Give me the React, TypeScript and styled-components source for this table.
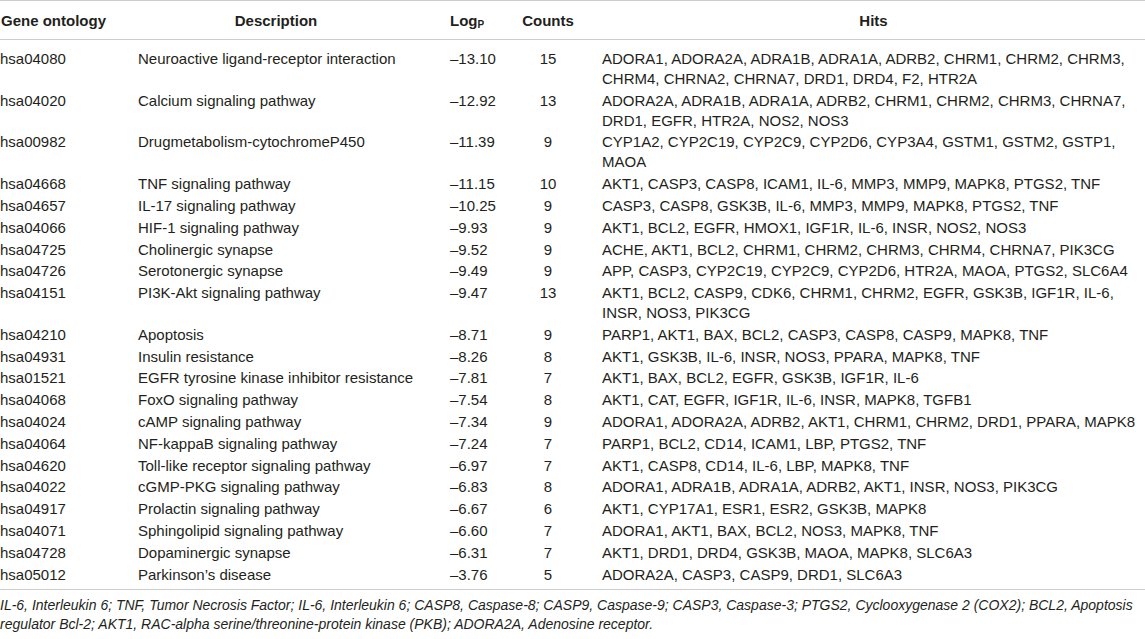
import React from "react";
import styled, { createGlobalStyle } from "styled-components";

const GlobalStyle = createGlobalStyle`
  html, body {
    margin: 0;
    padding: 0;
    background: #ffffff;
  }
  body {
    font-family: "Liberation Sans", Arial, Helvetica, sans-serif;
    color: #231f20;
  }
`;

const COLS = "138px 276px 90px 88px 1fr";

const Page = styled.div`
  width: 1145px;
  display: flex;
  flex-direction: column;
`;

const Table = styled.div`
  display: flex;
  flex-direction: column;
  border-top: 1px solid #cdcdcd;
  border-bottom: 1px solid #cdcdcd;
`;

const HeaderRow = styled.div`
  display: grid;
  grid-template-columns: ${COLS};
  border-bottom: 1px solid #cdcdcd;
  padding: 10px 0 8px;
  font-weight: 700;
  font-size: 15px;
  line-height: 20px;
`;

const HeaderCell = styled.div<{ $align?: "left" | "center"; $padLeft?: number }>`
  text-align: ${(p) => p.$align ?? "left"};
  padding-left: ${(p) => p.$padLeft ?? 0}px;
  white-space: nowrap;
`;

const Sub = styled.sub`
  font-size: 10px;
  vertical-align: -2px;
  line-height: 0;
`;

const Body = styled.div`
  display: flex;
  flex-direction: column;
  padding: 8px 0 4px;
`;

const Row = styled.div`
  display: grid;
  grid-template-columns: ${COLS};
  padding: 0.9px 0;
  font-size: 15px;
  line-height: 20px;
`;

const Cell = styled.div<{ $align?: "left" | "center"; $padLeft?: number }>`
  text-align: ${(p) => p.$align ?? "left"};
  padding-left: ${(p) => p.$padLeft ?? 0}px;
  white-space: nowrap;
`;

const HitLine = styled.div`
  white-space: nowrap;
`;

const Footnote = styled.p`
  margin: 0;
  padding-top: 6px;
  font-style: italic;
  font-size: 14px;
  line-height: 19px;
`;

type Entry = {
  id: string;
  desc: string;
  logp: string;
  count: string;
  hits: string[];
};

const DATA: Entry[] = [
  {
    id: "hsa04080",
    desc: "Neuroactive ligand-receptor interaction",
    logp: "–13.10",
    count: "15",
    hits: [
      "ADORA1, ADORA2A, ADRA1B, ADRA1A, ADRB2, CHRM1, CHRM2, CHRM3,",
      "CHRM4, CHRNA2, CHRNA7, DRD1, DRD4, F2, HTR2A",
    ],
  },
  {
    id: "hsa04020",
    desc: "Calcium signaling pathway",
    logp: "–12.92",
    count: "13",
    hits: [
      "ADORA2A, ADRA1B, ADRA1A, ADRB2, CHRM1, CHRM2, CHRM3, CHRNA7,",
      "DRD1, EGFR, HTR2A, NOS2, NOS3",
    ],
  },
  {
    id: "hsa00982",
    desc: "Drugmetabolism-cytochromeP450",
    logp: "–11.39",
    count: "9",
    hits: [
      "CYP1A2, CYP2C19, CYP2C9, CYP2D6, CYP3A4, GSTM1, GSTM2, GSTP1,",
      "MAOA",
    ],
  },
  {
    id: "hsa04668",
    desc: "TNF signaling pathway",
    logp: "–11.15",
    count: "10",
    hits: ["AKT1, CASP3, CASP8, ICAM1, IL-6, MMP3, MMP9, MAPK8, PTGS2, TNF"],
  },
  {
    id: "hsa04657",
    desc: "IL-17 signaling pathway",
    logp: "–10.25",
    count: "9",
    hits: ["CASP3, CASP8, GSK3B, IL-6, MMP3, MMP9, MAPK8, PTGS2, TNF"],
  },
  {
    id: "hsa04066",
    desc: "HIF-1 signaling pathway",
    logp: "–9.93",
    count: "9",
    hits: ["AKT1, BCL2, EGFR, HMOX1, IGF1R, IL-6, INSR, NOS2, NOS3"],
  },
  {
    id: "hsa04725",
    desc: "Cholinergic synapse",
    logp: "–9.52",
    count: "9",
    hits: ["ACHE, AKT1, BCL2, CHRM1, CHRM2, CHRM3, CHRM4, CHRNA7, PIK3CG"],
  },
  {
    id: "hsa04726",
    desc: "Serotonergic synapse",
    logp: "–9.49",
    count: "9",
    hits: ["APP, CASP3, CYP2C19, CYP2C9, CYP2D6, HTR2A, MAOA, PTGS2, SLC6A4"],
  },
  {
    id: "hsa04151",
    desc: "PI3K-Akt signaling pathway",
    logp: "–9.47",
    count: "13",
    hits: [
      "AKT1, BCL2, CASP9, CDK6, CHRM1, CHRM2, EGFR, GSK3B, IGF1R, IL-6,",
      "INSR, NOS3, PIK3CG",
    ],
  },
  {
    id: "hsa04210",
    desc: "Apoptosis",
    logp: "–8.71",
    count: "9",
    hits: ["PARP1, AKT1, BAX, BCL2, CASP3, CASP8, CASP9, MAPK8, TNF"],
  },
  {
    id: "hsa04931",
    desc: "Insulin resistance",
    logp: "–8.26",
    count: "8",
    hits: ["AKT1, GSK3B, IL-6, INSR, NOS3, PPARA, MAPK8, TNF"],
  },
  {
    id: "hsa01521",
    desc: "EGFR tyrosine kinase inhibitor resistance",
    logp: "–7.81",
    count: "7",
    hits: ["AKT1, BAX, BCL2, EGFR, GSK3B, IGF1R, IL-6"],
  },
  {
    id: "hsa04068",
    desc: "FoxO signaling pathway",
    logp: "–7.54",
    count: "8",
    hits: ["AKT1, CAT, EGFR, IGF1R, IL-6, INSR, MAPK8, TGFB1"],
  },
  {
    id: "hsa04024",
    desc: "cAMP signaling pathway",
    logp: "–7.34",
    count: "9",
    hits: ["ADORA1, ADORA2A, ADRB2, AKT1, CHRM1, CHRM2, DRD1, PPARA, MAPK8"],
  },
  {
    id: "hsa04064",
    desc: "NF-kappaB signaling pathway",
    logp: "–7.24",
    count: "7",
    hits: ["PARP1, BCL2, CD14, ICAM1, LBP, PTGS2, TNF"],
  },
  {
    id: "hsa04620",
    desc: "Toll-like receptor signaling pathway",
    logp: "–6.97",
    count: "7",
    hits: ["AKT1, CASP8, CD14, IL-6, LBP, MAPK8, TNF"],
  },
  {
    id: "hsa04022",
    desc: "cGMP-PKG signaling pathway",
    logp: "–6.83",
    count: "8",
    hits: ["ADORA1, ADRA1B, ADRA1A, ADRB2, AKT1, INSR, NOS3, PIK3CG"],
  },
  {
    id: "hsa04917",
    desc: "Prolactin signaling pathway",
    logp: "–6.67",
    count: "6",
    hits: ["AKT1, CYP17A1, ESR1, ESR2, GSK3B, MAPK8"],
  },
  {
    id: "hsa04071",
    desc: "Sphingolipid signaling pathway",
    logp: "–6.60",
    count: "7",
    hits: ["ADORA1, AKT1, BAX, BCL2, NOS3, MAPK8, TNF"],
  },
  {
    id: "hsa04728",
    desc: "Dopaminergic synapse",
    logp: "–6.31",
    count: "7",
    hits: ["AKT1, DRD1, DRD4, GSK3B, MAOA, MAPK8, SLC6A3"],
  },
  {
    id: "hsa05012",
    desc: "Parkinson’s disease",
    logp: "–3.76",
    count: "5",
    hits: ["ADORA2A, CASP3, CASP9, DRD1, SLC6A3"],
  },
];

export default function App() {
  return (
    <Page>
      <GlobalStyle />
      <Table>
        <HeaderRow>
          <HeaderCell $padLeft={1}>Gene ontology</HeaderCell>
          <HeaderCell $align="center">Description</HeaderCell>
          <HeaderCell $padLeft={36}>
            Log<Sub>P</Sub>
          </HeaderCell>
          <HeaderCell $align="center">Counts</HeaderCell>
          <HeaderCell $align="center" $padLeft={10}>
            Hits
          </HeaderCell>
        </HeaderRow>
        <Body>
          {DATA.map((e) => (
            <Row key={e.id}>
              <Cell>{e.id}</Cell>
              <Cell>{e.desc}</Cell>
              <Cell $padLeft={36}>{e.logp}</Cell>
              <Cell $align="center">{e.count}</Cell>
              <Cell $padLeft={10}>
                {e.hits.map((h, i) => (
                  <HitLine key={i}>{h}</HitLine>
                ))}
              </Cell>
            </Row>
          ))}
        </Body>
      </Table>
      <Footnote>
        IL-6, Interleukin 6; TNF, Tumor Necrosis Factor; IL-6, Interleukin 6;
        CASP8, Caspase-8; CASP9, Caspase-9; CASP3, Caspase-3; PTGS2,
        Cyclooxygenase 2 (COX2); BCL2, Apoptosis regulator Bcl-2; AKT1,
        RAC-alpha serine/threonine-protein kinase (PKB); ADORA2A, Adenosine
        receptor.
      </Footnote>
    </Page>
  );
}
